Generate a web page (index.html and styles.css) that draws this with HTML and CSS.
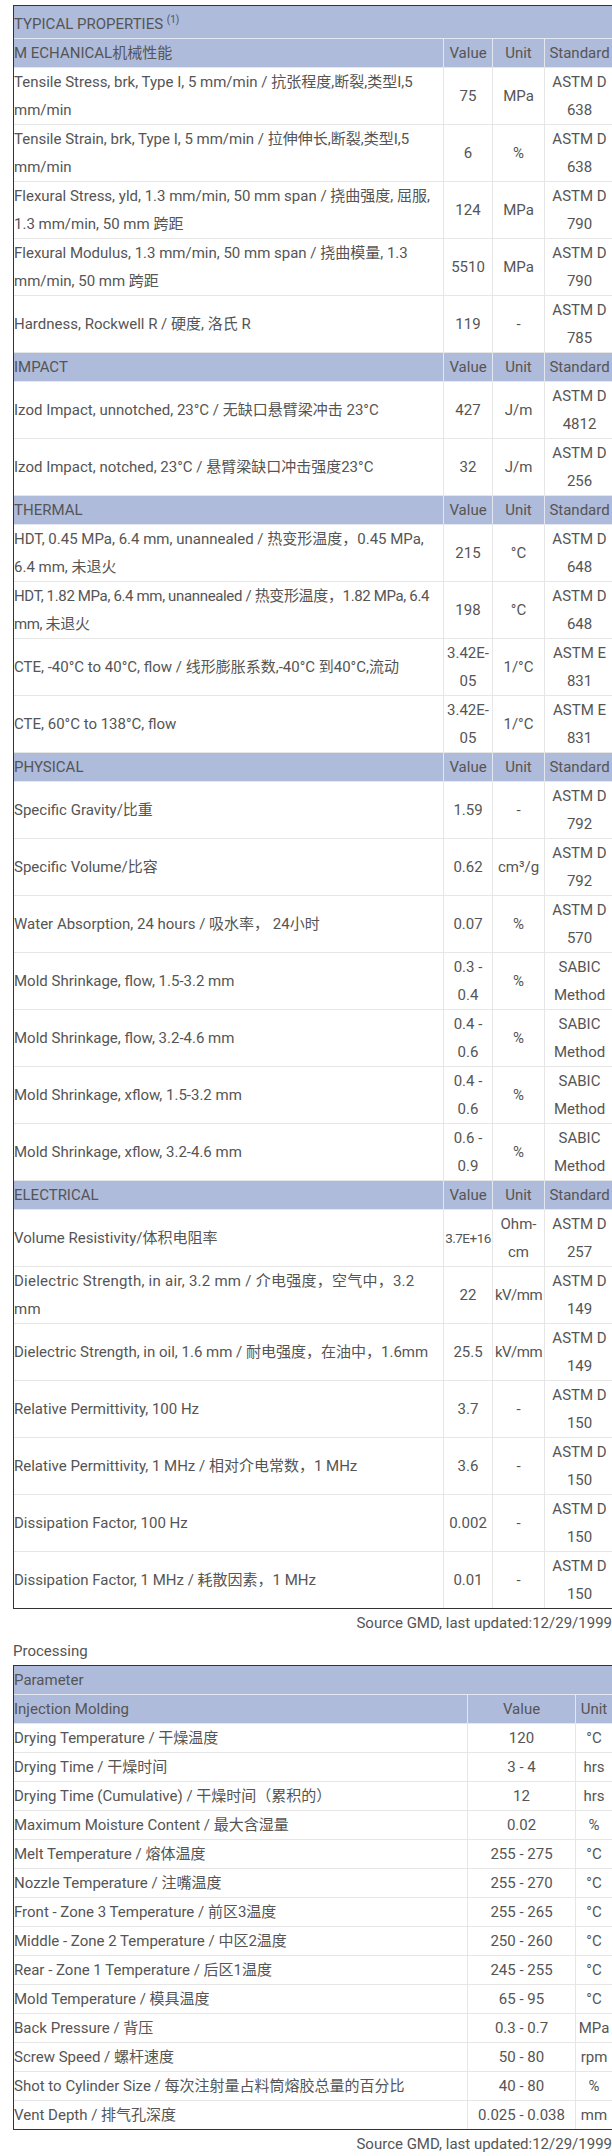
FILE: index.html
```html
<!DOCTYPE html>
<html>
<head>
<meta charset="utf-8">
<link rel="stylesheet" href="styles.css">
</head>
<body>
<div class="page">
<table class="grid props">
<colgroup><col class="c-desc"><col class="c-val"><col class="c-unit"><col class="c-std"></colgroup>
<tr class="head title"><td colspan="4" class="desc">TYPICAL PROPERTIES <sup>(1)</sup></td></tr>
<tr class="head"><td class="desc">M ECHANICAL机械性能</td><td>Value</td><td>Unit</td><td class="std">Standard</td></tr>
<tr><td class="desc">Tensile Stress, brk, Type I, 5 mm/min / 抗张程度,断裂,类型I,5 mm/min</td><td>75</td><td>MPa</td><td>ASTM D 638</td></tr>
<tr><td class="desc">Tensile Strain, brk, Type I, 5 mm/min / 拉伸伸长,断裂,类型I,5 mm/min</td><td>6</td><td>%</td><td>ASTM D 638</td></tr>
<tr><td class="desc">Flexural Stress, yld, 1.3 mm/min, 50 mm span / 挠曲强度, 屈服, 1.3 mm/min, 50 mm 跨距</td><td>124</td><td>MPa</td><td>ASTM D 790</td></tr>
<tr><td class="desc">Flexural Modulus, 1.3 mm/min, 50 mm span / 挠曲模量, 1.3 mm/min, 50 mm 跨距</td><td>5510</td><td>MPa</td><td>ASTM D 790</td></tr>
<tr><td class="desc">Hardness, Rockwell R / 硬度, 洛氏 R</td><td>119</td><td>-</td><td>ASTM D 785</td></tr>
<tr class="head"><td class="desc">IMPACT</td><td>Value</td><td>Unit</td><td class="std">Standard</td></tr>
<tr><td class="desc">Izod Impact, unnotched, 23°C / 无缺口悬臂梁冲击 23°C</td><td>427</td><td>J/m</td><td>ASTM D 4812</td></tr>
<tr><td class="desc">Izod Impact, notched, 23°C / 悬臂梁缺口冲击强度23°C</td><td>32</td><td>J/m</td><td>ASTM D 256</td></tr>
<tr class="head"><td class="desc">THERMAL</td><td>Value</td><td>Unit</td><td class="std">Standard</td></tr>
<tr><td class="desc">HDT, 0.45 MPa, 6.4 mm, unannealed / 热变形温度，0.45 MPa, 6.4 mm, 未退火</td><td>215</td><td>°C</td><td>ASTM D 648</td></tr>
<tr><td class="desc snug">HDT, 1.82 MPa, 6.4 mm, unannealed / 热变形温度，1.82 MPa, 6.4 mm, 未退火</td><td>198</td><td>°C</td><td>ASTM D 648</td></tr>
<tr><td class="desc">CTE, -40°C to 40°C, flow / 线形膨胀系数,-40°C 到40°C,流动</td><td>3.42E-<wbr>05</td><td>1/°C</td><td>ASTM E 831</td></tr>
<tr><td class="desc">CTE, 60°C to 138°C, flow</td><td>3.42E-<wbr>05</td><td>1/°C</td><td>ASTM E 831</td></tr>
<tr class="head"><td class="desc">PHYSICAL</td><td>Value</td><td>Unit</td><td class="std">Standard</td></tr>
<tr><td class="desc">Specific Gravity/比重</td><td>1.59</td><td>-</td><td>ASTM D 792</td></tr>
<tr><td class="desc">Specific Volume/比容</td><td>0.62</td><td>cm³/g</td><td>ASTM D 792</td></tr>
<tr><td class="desc">Water Absorption, 24 hours / 吸水率， 24小时</td><td>0.07</td><td>%</td><td>ASTM D 570</td></tr>
<tr><td class="desc">Mold Shrinkage, flow, 1.5-3.2 mm</td><td>0.3 - 0.4</td><td>%</td><td>SABIC Method</td></tr>
<tr><td class="desc">Mold Shrinkage, flow, 3.2-4.6 mm</td><td>0.4 - 0.6</td><td>%</td><td>SABIC Method</td></tr>
<tr><td class="desc">Mold Shrinkage, xflow, 1.5-3.2 mm</td><td>0.4 - 0.6</td><td>%</td><td>SABIC Method</td></tr>
<tr><td class="desc">Mold Shrinkage, xflow, 3.2-4.6 mm</td><td>0.6 - 0.9</td><td>%</td><td>SABIC Method</td></tr>
<tr class="head"><td class="desc">ELECTRICAL</td><td>Value</td><td>Unit</td><td class="std">Standard</td></tr>
<tr><td class="desc">Volume Resistivity/体积电阻率</td><td class="tighter">3.7E+16</td><td>Ohm-cm</td><td>ASTM D 257</td></tr>
<tr><td class="desc loose">Dielectric Strength, in air, 3.2 mm / 介电强度，空气中，3.2 mm</td><td>22</td><td class="tight">kV/mm</td><td>ASTM D 149</td></tr>
<tr><td class="desc">Dielectric Strength, in oil, 1.6 mm / 耐电强度，在油中，1.6mm</td><td>25.5</td><td class="tight">kV/mm</td><td>ASTM D 149</td></tr>
<tr><td class="desc">Relative Permittivity, 100 Hz</td><td>3.7</td><td>-</td><td>ASTM D 150</td></tr>
<tr><td class="desc">Relative Permittivity, 1 MHz / 相对介电常数，1 MHz</td><td>3.6</td><td>-</td><td>ASTM D 150</td></tr>
<tr><td class="desc">Dissipation Factor, 100 Hz</td><td>0.002</td><td>-</td><td>ASTM D 150</td></tr>
<tr class="last"><td class="desc">Dissipation Factor, 1 MHz / 耗散因素，1 MHz</td><td>0.01</td><td>-</td><td>ASTM D 150</td></tr>
</table>
<div class="source">Source GMD, last updated:12/29/1999</div>
<div class="section-title">Processing</div>
<table class="grid proc">
<colgroup><col class="p-desc"><col class="p-val"><col class="p-unit"></colgroup>
<tr class="head"><td colspan="3" class="desc">Parameter</td></tr>
<tr class="head"><td class="desc">Injection Molding</td><td>Value</td><td>Unit</td></tr>
<tr><td class="desc">Drying Temperature / 干燥温度</td><td>120</td><td>°C</td></tr>
<tr><td class="desc">Drying Time / 干燥时间</td><td>3 - 4</td><td>hrs</td></tr>
<tr><td class="desc">Drying Time (Cumulative) / 干燥时间（累积的）</td><td>12</td><td>hrs</td></tr>
<tr><td class="desc">Maximum Moisture Content / 最大含湿量</td><td>0.02</td><td>%</td></tr>
<tr><td class="desc">Melt Temperature / 熔体温度</td><td>255 - 275</td><td>°C</td></tr>
<tr><td class="desc">Nozzle Temperature / 注嘴温度</td><td>255 - 270</td><td>°C</td></tr>
<tr><td class="desc">Front - Zone 3 Temperature / 前区3温度</td><td>255 - 265</td><td>°C</td></tr>
<tr><td class="desc">Middle - Zone 2 Temperature / 中区2温度</td><td>250 - 260</td><td>°C</td></tr>
<tr><td class="desc">Rear - Zone 1 Temperature / 后区1温度</td><td>245 - 255</td><td>°C</td></tr>
<tr><td class="desc">Mold Temperature / 模具温度</td><td>65 - 95</td><td>°C</td></tr>
<tr><td class="desc">Back Pressure / 背压</td><td>0.3 - 0.7</td><td>MPa</td></tr>
<tr><td class="desc">Screw Speed / 螺杆速度</td><td>50 - 80</td><td>rpm</td></tr>
<tr><td class="desc">Shot to Cylinder Size / 每次注射量占料筒熔胶总量的百分比</td><td>40 - 80</td><td>%</td></tr>
<tr class="last"><td class="desc">Vent Depth / 排气孔深度</td><td>0.025 - 0.038</td><td>mm</td></tr>
</table>
<div class="source">Source GMD, last updated:12/29/1999</div>
</div>
</body>
</html>
```

FILE: styles.css
```css
html, body {
  margin: 0;
  padding: 0;
  background: #ffffff;
}

body {
  font-family: Roboto, "Noto Sans CJK SC", sans-serif;
  font-size: 15px;
  line-height: 28px;
  color: #555555;
  letter-spacing: 0;
}

.page {
  width: 599px;
  padding: 5px 0 0 13px;
  overflow: hidden;
}

.grid {
  border: 1px solid #333333;
  border-spacing: 0;
  table-layout: fixed;
}

.props { width: 602px; }
.proc { width: 600px; }

.c-desc { width: 429px; }
.c-val { width: 49px; }
.c-unit { width: 52px; }
.c-std { width: 70px; }

.p-desc { width: 453px; }
.p-val { width: 108px; }
.p-unit { width: 37px; }

.grid td {
  padding: 0 1px;
  text-align: center;
  vertical-align: middle;
  border-bottom: 1px solid #e6e6e6;
  border-left: 1px solid #e6e6e6;
}

.grid td.desc {
  text-align: left;
  border-left: none;
  padding-left: 0;
}

.grid tr.title td {
  padding-top: 4px;
}

.grid td.snug {
  letter-spacing: -0.35px;
}

.grid td.loose {
  letter-spacing: 0.25px;
}

.grid tr.last td {
  border-bottom: none;
}

.grid tr.head td {
  background: #afbbdb;
  border-bottom-color: #e3e7f2;
  border-left-color: #e3e7f2;
}

.grid td.std {
  padding: 0;
}

.grid td.tight {
  letter-spacing: -0.5px;
  padding: 0;
}

.grid td.tighter {
  font-size: 13.5px;
  letter-spacing: -0.5px;
  padding: 0;
}

sup {
  font-size: 10px;
  line-height: 0;
  vertical-align: 6px;
}

.source {
  text-align: right;
}

.section-title {
  text-align: left;
}
```
